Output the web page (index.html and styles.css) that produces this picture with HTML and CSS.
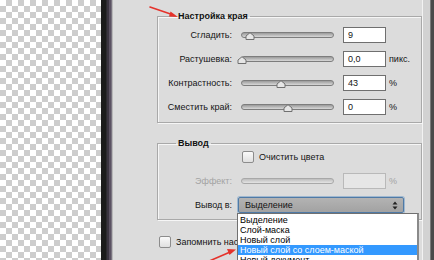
FILE: index.html
```html
<!DOCTYPE html>
<html>
<head>
<meta charset="utf-8">
<link rel="stylesheet" href="styles.css">
</head>
<body>
<div class="checker"></div>
<div class="frame"></div>
<div class="dialog">
  <fieldset class="group g1">
    <legend>Настройка края</legend>
    <div class="grid">
      <span class="lbl">Сгладить:</span>
      <div class="slider"><div class="track"></div><svg class="thumb" style="left:4px" width="10" height="8" viewBox="0 0 10 8"><path d="M1 7.5V4L5 .7 9 4v3.5z" fill="#e6e6e6" stroke="#707070"/></svg></div>
      <div class="field">9</div>
      <span class="unit"></span>

      <span class="lbl">Растушевка:</span>
      <div class="slider"><div class="track"></div><svg class="thumb" style="left:-4px" width="10" height="8" viewBox="0 0 10 8"><path d="M1 7.5V4L5 .7 9 4v3.5z" fill="#e6e6e6" stroke="#707070"/></svg></div>
      <div class="field">0,0</div>
      <span class="unit">пикс.</span>

      <span class="lbl">Контрастность:</span>
      <div class="slider"><div class="track"></div><svg class="thumb" style="left:35px" width="10" height="8" viewBox="0 0 10 8"><path d="M1 7.5V4L5 .7 9 4v3.5z" fill="#e6e6e6" stroke="#707070"/></svg></div>
      <div class="field">43</div>
      <span class="unit">%</span>

      <span class="lbl">Сместить край:</span>
      <div class="slider"><div class="track"></div><svg class="thumb" style="left:42px" width="10" height="8" viewBox="0 0 10 8"><path d="M1 7.5V4L5 .7 9 4v3.5z" fill="#e6e6e6" stroke="#707070"/></svg></div>
      <div class="field">0</div>
      <span class="unit">%</span>
    </div>
  </fieldset>

  <fieldset class="group g2">
    <legend>Вывод</legend>
    <div class="grid">
      <span class="lbl"></span>
      <label class="check wide"><span class="box"></span>Очистить цвета</label>

      <span class="lbl dis">Эффект:</span>
      <div class="slider"><div class="track off"></div></div>
      <div class="field off"></div>
      <span class="unit dis">%</span>

      <span class="lbl">Вывод в:</span>
      <div class="select wide"><span>Выделение</span>
        <svg width="6" height="9" viewBox="0 0 6 9"><path d="M3 0.5 5.5 3.5H.5zM3 8.5 5.5 5.5H.5z" fill="#222"/></svg>
      </div>
    </div>
  </fieldset>

  <label class="check remember"><span class="box"></span>Запомнить настройки</label>

  <ul class="menu">
    <li>Выделение</li>
    <li>Слой-маска</li>
    <li>Новый слой</li>
    <li class="sel">Новый слой со слоем-маской</li>
    <li>Новый документ</li>
  </ul>
</div>
<div class="edge"></div>

<svg class="notes" width="434" height="260" viewBox="0 0 434 260">
  <g stroke="#e5322b" stroke-width="1.6" fill="#e5322b" stroke-linecap="round">
    <line x1="150" y1="7" x2="172" y2="14.6"/>
    <path d="M178 17 170.5 11.5 169 16.5z" stroke="none"/>
    <line x1="207" y1="262" x2="229" y2="252.5"/>
    <path d="M236 249.5 227 249 229.5 255z" stroke="none"/>
  </g>
</svg>
</body>
</html>
```

FILE: styles.css
```css
html, body {
  margin: 0;
  padding: 0;
}
body {
  width: 434px;
  height: 260px;
  overflow: hidden;
  display: flex;
  position: relative;
  font-family: "Liberation Sans", Arial, sans-serif;
  font-size: 9px;
  color: #141414;
  background: #dcdcdc;
}
.checker {
  width: 101px;
  flex: none;
  background: repeating-conic-gradient(#cdcdcd 0 25%, #ffffff 0 50%) 0 0 / 12px 12px;
}
.frame {
  width: 12px;
  flex: none;
  background: linear-gradient(to right,
    #1b1b1b 0 5px, #2c2a2e 5px 6px, #3a3440 6px 8px,
    #5b5262 8px 10px, #7a7480 10px 11px, #b9b9b9 11px 12px);
}
.dialog {
  width: 309px;
  flex: none;
  position: relative;
  box-sizing: border-box;
  padding: 10px 0 0 44px;
  background: #dcdcdc;
}
.edge {
  flex: 1;
  background: linear-gradient(to right,
    #f2f2f2 0 1px, #d2d2d2 1px 8px, #7a7a7a 8px 9px, #4a4a4a 9px 12px);
}
.group {
  box-sizing: border-box;
  width: 265px;
  margin: 0;
  min-width: 0;
  border: 1px solid #a9a9a9;
  box-shadow: inset 1px 1px 0 #f6f6f6, 1px 1px 0 #f6f6f6;
  padding: 5px 0 7px 0;
}
.group legend {
  font-weight: bold;
  line-height: 12px;
  padding: 0 2px;
  margin-left: 18px;
  color: #111;
}
.g2 {
  margin-top: 14px;
  padding: 0 0 6px 0;
}
.grid {
  display: grid;
  grid-template-columns: 74px 93px 43px 30px;
  grid-auto-rows: 16px;
  column-gap: 9px;
  row-gap: 8px;
  align-items: center;
}
.lbl {
  text-align: right;
  white-space: nowrap;
}
.dis {
  color: #a3a3a3;
}
.unit {
  margin-left: -6px;
}
.slider {
  position: relative;
  height: 16px;
  display: flex;
  align-items: center;
}
.track {
  flex: 1;
  height: 4px;
  border: 1px solid #7d7d7d;
  border-radius: 3px;
  background: linear-gradient(#9a9a9a, #d8d8d8);
}
.track.off {
  border-color: #a8a8a8;
  background: linear-gradient(#bdbdbd, #e4e4e4);
}
.thumb {
  position: absolute;
  top: 5px;
}
.field {
  box-sizing: border-box;
  height: 16px;
  border: 1px solid #6f6f6f;
  background: #fff;
  padding-left: 4px;
  line-height: 14px;
}
.field.off {
  border-color: #b9b9b9;
  background: #e6e6e6;
}
.check {
  display: flex;
  align-items: center;
  gap: 5px;
  white-space: nowrap;
}
.wide {
  grid-column: 2 / 5;
}
.box {
  box-sizing: border-box;
  width: 12px;
  height: 12px;
  border: 1px solid #8c8c8c;
  border-radius: 2px;
  background: linear-gradient(#fafafa, #e0e0e0);
  margin-left: 1px;
}
.select {
  box-sizing: border-box;
  height: 16px;
  width: 166px;
  margin-left: -3px;
  border: 1px solid #4f7aa6;
  border-radius: 2px;
  background: linear-gradient(#b3b3b3, #a2a2a2);
  box-shadow: 0 0 0 1px #9fb8d0;
  display: flex;
  align-items: center;
  justify-content: space-between;
  padding: 0 5px 0 6px;
}
.remember {
  margin-top: 16px;
  margin-left: 1px;
  gap: 5px;
}
.menu {
  position: absolute;
  left: 124px;
  top: 213px;
  width: 182px;
  margin: 0;
  padding: 1px 0 0 0;
  list-style: none;
  background: #fff;
  border: 1px solid #707070;
  border-right: 2px solid #8a8a8a;
  box-sizing: border-box;
  height: 60px;
}
.menu li {
  height: 10px;
  line-height: 10px;
  padding-left: 2px;
  white-space: nowrap;
  color: #000;
}
.menu li.sel {
  background: #3399ff;
  color: #fff;
}
.notes {
  position: absolute;
  left: 0;
  top: 0;
  pointer-events: none;
}
```
